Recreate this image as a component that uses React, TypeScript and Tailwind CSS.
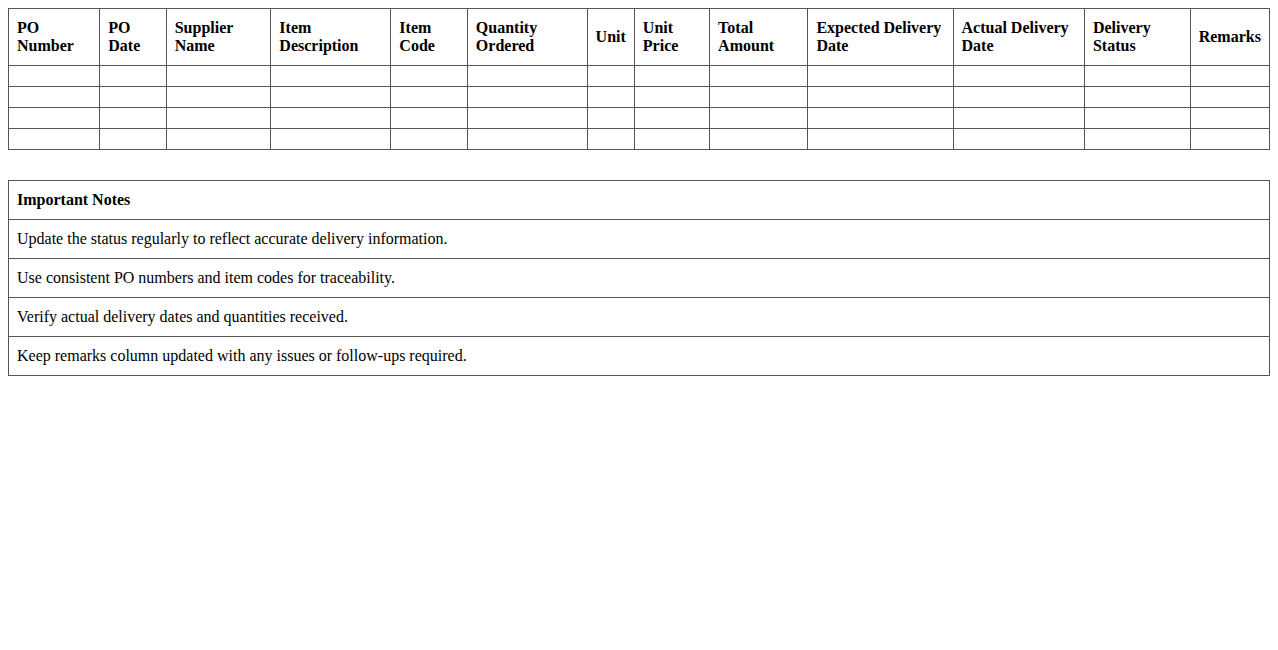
import React from "react";

const headers = [
  "PO Number",
  "PO Date",
  "Supplier Name",
  "Item Description",
  "Item Code",
  "Quantity Ordered",
  "Unit",
  "Unit Price",
  "Total Amount",
  "Expected Delivery Date",
  "Actual Delivery Date",
  "Delivery Status",
  "Remarks",
];

const notes = [
  "Update the status regularly to reflect accurate delivery information.",
  "Use consistent PO numbers and item codes for traceability.",
  "Verify actual delivery dates and quantities received.",
  "Keep remarks column updated with any issues or follow-ups required.",
];

const cell = "border border-[#555] px-2 py-[10px] text-left align-middle";

const App = () => {
  return (
    <div
      className="p-2 bg-white text-black text-base leading-[18px] min-h-screen"
      style={{ fontFamily: '"Liberation Serif", "Times New Roman", serif' }}>
      <table className="w-full border-collapse">
        <thead>
          <tr>
            {headers.map((h, i) => (
              <th key={i} className={`${cell} font-bold`}>
                {h}
              </th>
            ))}
          </tr>
        </thead>
        <tbody>
          {[0, 1, 2, 3].map((r) => (
            <tr key={r}>
              {headers.map((_, i) => (
                <td key={i} className={cell}></td>
              ))}
            </tr>
          ))}
        </tbody>
      </table>

      <table className="w-full border-collapse mt-[30px]">
        <thead>
          <tr>
            <th className={`${cell} font-bold`}>Important Notes</th>
          </tr>
        </thead>
        <tbody>
          {notes.map((n, i) => (
            <tr key={i}>
              <td className={cell}>{n}</td>
            </tr>
          ))}
        </tbody>
      </table>
    </div>
  );
};

export default App;
